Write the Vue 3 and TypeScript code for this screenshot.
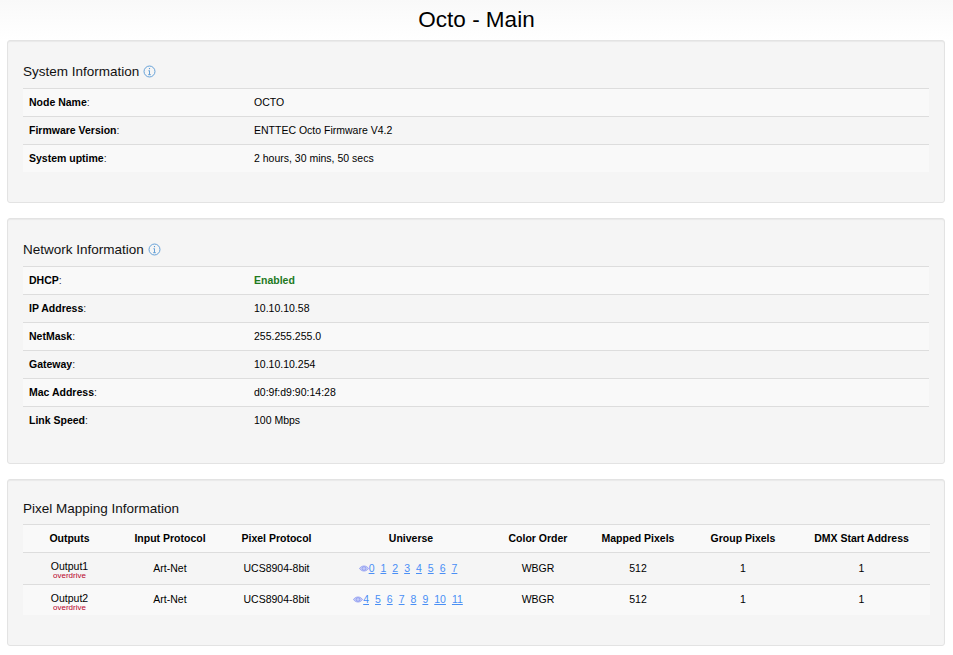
<script setup lang="ts">
const systemRows = [
  { label: 'Node Name', value: 'OCTO' },
  { label: 'Firmware Version', value: 'ENTTEC Octo Firmware V4.2' },
  { label: 'System uptime', value: '2 hours, 30 mins, 50 secs' },
]
const networkRows = [
  { label: 'DHCP', value: 'Enabled', ok: true },
  { label: 'IP Address', value: '10.10.10.58' },
  { label: 'NetMask', value: '255.255.255.0' },
  { label: 'Gateway', value: '10.10.10.254' },
  { label: 'Mac Address', value: 'd0:9f:d9:90:14:28' },
  { label: 'Link Speed', value: '100 Mbps' },
]
const headers = ['Outputs', 'Input Protocol', 'Pixel Protocol', 'Universe', 'Color Order', 'Mapped Pixels', 'Group Pixels', 'DMX Start Address']
const widths = [93, 108, 105, 164, 90, 110, 100, 137]
const outputs = [
  { name: 'Output1', universes: [0, 1, 2, 3, 4, 5, 6, 7] },
  { name: 'Output2', universes: [4, 5, 6, 7, 8, 9, 10, 11] },
]
</script>

<template>
  <div class="page">
    <header class="title"><h1>Octo - Main</h1></header>

    <section class="well">
      <h2>System Information
        <svg class="info" viewBox="0 0 14 14" aria-hidden="true"><circle cx="7" cy="7" r="5.9" /><path d="M7 6v4.4M5.8 6.2H7M5.6 10.4h2.8" /><path class="dot" d="M6.4 3.2h1.2v1.3H6.4z" /></svg>
      </h2>
      <div class="rows">
        <div v-for="r in systemRows" :key="r.label" class="row">
          <div class="label"><b>{{ r.label }}</b>:</div>
          <div>{{ r.value }}</div>
        </div>
      </div>
    </section>

    <section class="well network">
      <h2>Network Information
        <svg class="info" viewBox="0 0 14 14" aria-hidden="true"><circle cx="7" cy="7" r="5.9" /><path d="M7 6v4.4M5.8 6.2H7M5.6 10.4h2.8" /><path class="dot" d="M6.4 3.2h1.2v1.3H6.4z" /></svg>
      </h2>
      <div class="rows">
        <div v-for="r in networkRows" :key="r.label" class="row">
          <div class="label"><b>{{ r.label }}</b>:</div>
          <div :class="{ ok: r.ok }">{{ r.value }}</div>
        </div>
      </div>
    </section>

    <section class="well pixel">
      <h2>Pixel Mapping Information</h2>
      <table>
        <colgroup><col v-for="(w, i) in widths" :key="i" :style="{ width: w + 'px' }" /></colgroup>
        <thead>
          <tr><th v-for="h in headers" :key="h">{{ h }}</th></tr>
        </thead>
        <tbody>
          <tr v-for="o in outputs" :key="o.name">
            <td class="name"><div class="out">{{ o.name }}</div><div class="over">overdrive</div></td>
            <td>Art-Net</td>
            <td>UCS8904-8bit</td>
            <td>
              <svg class="eye" viewBox="0 0 12 8" aria-hidden="true"><path d="M.6 4C2 1.9 3.9 1 6 1s4 .9 5.4 3C10 6.1 8.1 7 6 7S2 6.1.6 4z" /><circle cx="6" cy="4" r="2.2" /></svg><a v-for="u in o.universes" :key="u" href="#" @click.prevent>{{ u }}</a>
            </td>
            <td>WBGR</td>
            <td>512</td>
            <td>1</td>
            <td>1</td>
          </tr>
        </tbody>
      </table>
    </section>
  </div>
</template>

<style scoped>
.page {
  width: 953px;
  height: 655px;
  overflow: hidden;
  font-family: "Liberation Sans", Arial, sans-serif;
  font-size: 10.5px;
  color: #000;
  background: #fff;
}
.title {
  height: 40px;
  background: linear-gradient(#f9f9f9, #fff);
  text-align: center;
}
h1 {
  margin: 0;
  font-size: 22.5px;
  font-weight: 400;
  line-height: 40px;
  color: #000;
}
.well {
  box-sizing: border-box;
  height: 163px;
  margin: 0 8px 15px 7px;
  padding: 0 15px;
  background: #f5f5f5;
  border: 1px solid #e3e3e3;
  border-radius: 3px;
  box-shadow: inset 0 1px 1px rgba(0, 0, 0, 0.05);
}
.network { height: 246px; }
.pixel { height: 167px; margin-bottom: 0; }
h2 {
  display: flex;
  align-items: center;
  gap: 4px;
  height: 47px;
  margin: 0;
  padding: 15px 0 1px;
  box-sizing: border-box;
  font-size: 13.5px;
  font-weight: 400;
  color: #111;
}
.pixel h2 { height: 44px; padding: 12px 0 0; }
.info {
  width: 13px;
  height: 13px;
  fill: none;
  stroke: #5b9bd5;
  stroke-width: 1;
}
.info .dot { fill: #5b9bd5; stroke: none; }
.row {
  display: grid;
  grid-template-columns: 225px 1fr;
  align-items: center;
  box-sizing: border-box;
  height: 28px;
  padding: 0 0 2px 6px;
  border-top: 1px solid #ddd;
}
.row:nth-child(odd) { background: #f9f9f9; }
.label { color: #333; }
.label b { color: #000; }
.ok { color: #1f7a1f; font-weight: 700; }
table {
  width: 907px;
  table-layout: fixed;
  border-collapse: collapse;
  text-align: center;
}
th {
  box-sizing: border-box;
  height: 28px;
  padding: 0 0 2px;
  border-top: 1px solid #ddd;
  font-weight: 700;
  background: #f9f9f9;
}
td {
  box-sizing: border-box;
  padding: 0 0 2px;
  height: 32px;
  border-top: 1px solid #ddd;
}
tbody tr:nth-child(2) td { height: 30px; background: #f9f9f9; }
td.name { padding: 9px 0 0; vertical-align: top; }
.out { line-height: 9px; }
.over { line-height: 9px; font-size: 8px; color: #b8002a; }
a {
  margin-right: 6px;
  color: #4a8ff5;
  text-decoration: underline;
}
.eye {
  width: 10px;
  height: 7px;
  fill: #c4cbf7;
  stroke: #8f9cf0;
  stroke-width: 1;
  vertical-align: -0.5px;
}
</style>
